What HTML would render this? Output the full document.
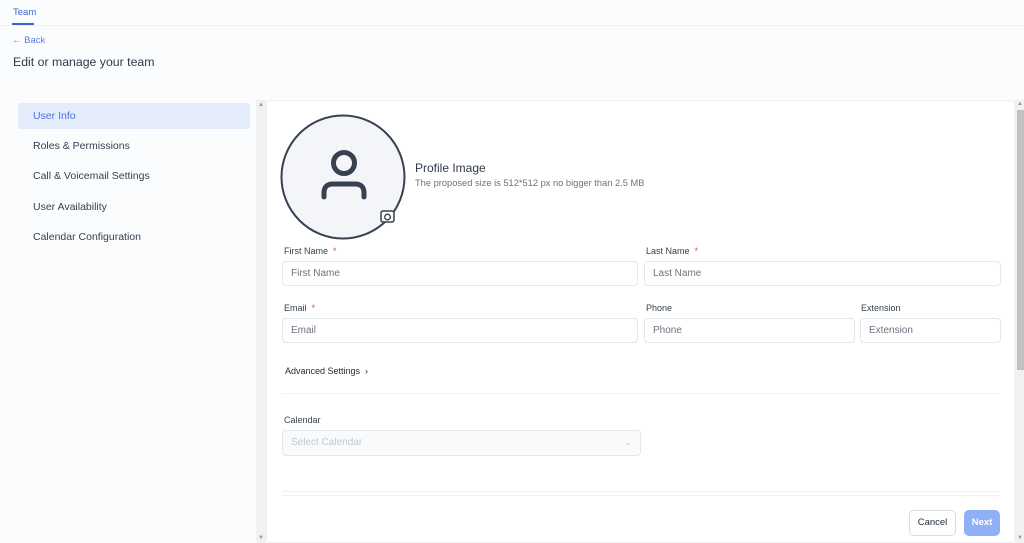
<!DOCTYPE html>
<html><head><meta charset="utf-8"><style>
*{box-sizing:border-box;margin:0;padding:0}
body{width:1024px;height:543px;overflow:hidden;background:#fbfcfd;font-family:"Liberation Sans",sans-serif;position:relative;color:#374151}
.abs{position:absolute}
.tab{left:13px;top:7px;font-size:9.5px;color:#3b63d6}
.tabline{left:12px;top:23px;width:22px;height:2px;background:#3b63d6}
.topline{left:0;top:25px;width:1024px;height:1px;background:#eef0f3}
.back{left:12px;top:35px;font-size:9.5px;color:#5b7fe6}
h1{position:absolute;left:13px;top:55px;font-size:12.3px;font-weight:normal;color:#2f3a48}
.nav{left:18px;width:232px;height:26px;font-size:10.5px;color:#374151;padding-left:15px;line-height:27px}
.nav.act{background:#e4ecfb;color:#4d73e0;border-radius:2px}
.track{left:256px;top:100px;width:10px;height:443px;background:#f1f1f1}
.panel{left:266px;top:100px;width:749px;height:443px;background:#fff;border:1px solid #eef0f3;border-radius:4px}
.sb{left:1015px;top:100px;width:9px;height:443px;background:#f1f1f1}
.thumb{left:1017px;top:110px;width:7px;height:260px;background:#c1c1c1}
.lbl{font-size:9px;color:#374151}
.req{color:#e5484d}
.inp{height:25px;border:1px solid #e3e6ea;border-radius:4px;font-size:10px;color:#6b7280;padding-left:8px;line-height:23px;background:#fff}
.hr{height:1px;background:#eef0f3}
</style></head><body>
<div class="abs tab">Team</div><div class="abs tabline"></div><div class="abs topline"></div>
<div class="abs back">&#8592; Back</div>
<h1>Edit or manage your team</h1>
<div class="abs nav act" style="top:103px">User Info</div>
<div class="abs nav" style="top:133px">Roles &amp; Permissions</div>
<div class="abs nav" style="top:163px">Call &amp; Voicemail Settings</div>
<div class="abs nav" style="top:194px">User Availability</div>
<div class="abs nav" style="top:224px">Calendar Configuration</div>
<div class="abs track"></div>
<div class="abs" style="left:258px;top:102px;font-size:6px;color:#999">&#9650;</div>
<div class="abs" style="left:258px;top:535px;font-size:6px;color:#999">&#9660;</div>
<div class="abs panel"></div>
<div class="abs sb"></div><div class="abs thumb"></div>
<div class="abs" style="left:1017px;top:101px;font-size:6px;color:#999">&#9650;</div>
<div class="abs" style="left:1017px;top:535px;font-size:6px;color:#999">&#9660;</div>
<svg class="abs" style="left:280px;top:113px" width="130" height="130">
<circle cx="63" cy="64" r="61.5" fill="#f4f5f8" stroke="#374151" stroke-width="2"/>
<circle cx="64" cy="50" r="10.5" fill="none" stroke="#374151" stroke-width="5"/>
<path d="M44 84 V80 Q44 71 53 71 H75 Q84 71 84 80 V84" fill="none" stroke="#374151" stroke-width="5" stroke-linecap="round"/>
<rect x="101" y="98" width="13" height="11" rx="2" fill="#fff" stroke="#374151" stroke-width="1.5"/>
<circle cx="107.5" cy="104" r="2.8" fill="none" stroke="#374151" stroke-width="1.3"/>
</svg>
<div class="abs" style="left:415px;top:161px;font-size:12px;color:#2f3a48">Profile Image</div>
<div class="abs" style="left:415px;top:178px;font-size:9.3px;color:#6b7280">The proposed size is 512*512 px no bigger than 2.5 MB</div>
<div class="abs lbl" style="left:284px;top:246px">First Name <span class="req">&nbsp;*</span></div>
<div class="abs lbl" style="left:646px;top:246px">Last Name <span class="req">&nbsp;*</span></div>
<div class="abs inp" style="left:282px;top:261px;width:356px">First Name</div>
<div class="abs inp" style="left:644px;top:261px;width:357px">Last Name</div>
<div class="abs lbl" style="left:284px;top:303px">Email <span class="req">&nbsp;*</span></div>
<div class="abs lbl" style="left:646px;top:303px">Phone</div>
<div class="abs lbl" style="left:861px;top:303px">Extension</div>
<div class="abs inp" style="left:282px;top:318px;width:356px">Email</div>
<div class="abs inp" style="left:644px;top:318px;width:211px">Phone</div>
<div class="abs inp" style="left:860px;top:318px;width:141px">Extension</div>
<div class="abs" style="left:285px;top:366px;font-size:9px;color:#1f2937">Advanced Settings &nbsp;&#8250;</div>
<div class="abs hr" style="left:282px;top:393px;width:718px"></div>
<div class="abs lbl" style="left:284px;top:415px">Calendar</div>
<div class="abs inp" style="left:282px;top:430px;width:359px;background:#f9fafb;color:#c4c8ce;height:26px">Select Calendar<span style="position:absolute;right:8px;top:0;color:#c4c8ce;font-size:9px">&#8964;</span></div>
<div class="abs hr" style="left:282px;top:491px;width:718px"></div>
<div class="abs hr" style="left:282px;top:495px;width:718px"></div>
<div class="abs" style="left:909px;top:510px;width:47px;height:26px;border:1px solid #d9dce1;border-radius:5px;background:#fff;font-size:9.5px;color:#1f2937;text-align:center;line-height:24px">Cancel</div>
<div class="abs" style="left:964px;top:510px;width:36px;height:26px;border-radius:5px;background:#8fb0f7;font-size:9.5px;color:#fff;text-align:center;line-height:26px;font-weight:bold">Next</div>
</body></html>
